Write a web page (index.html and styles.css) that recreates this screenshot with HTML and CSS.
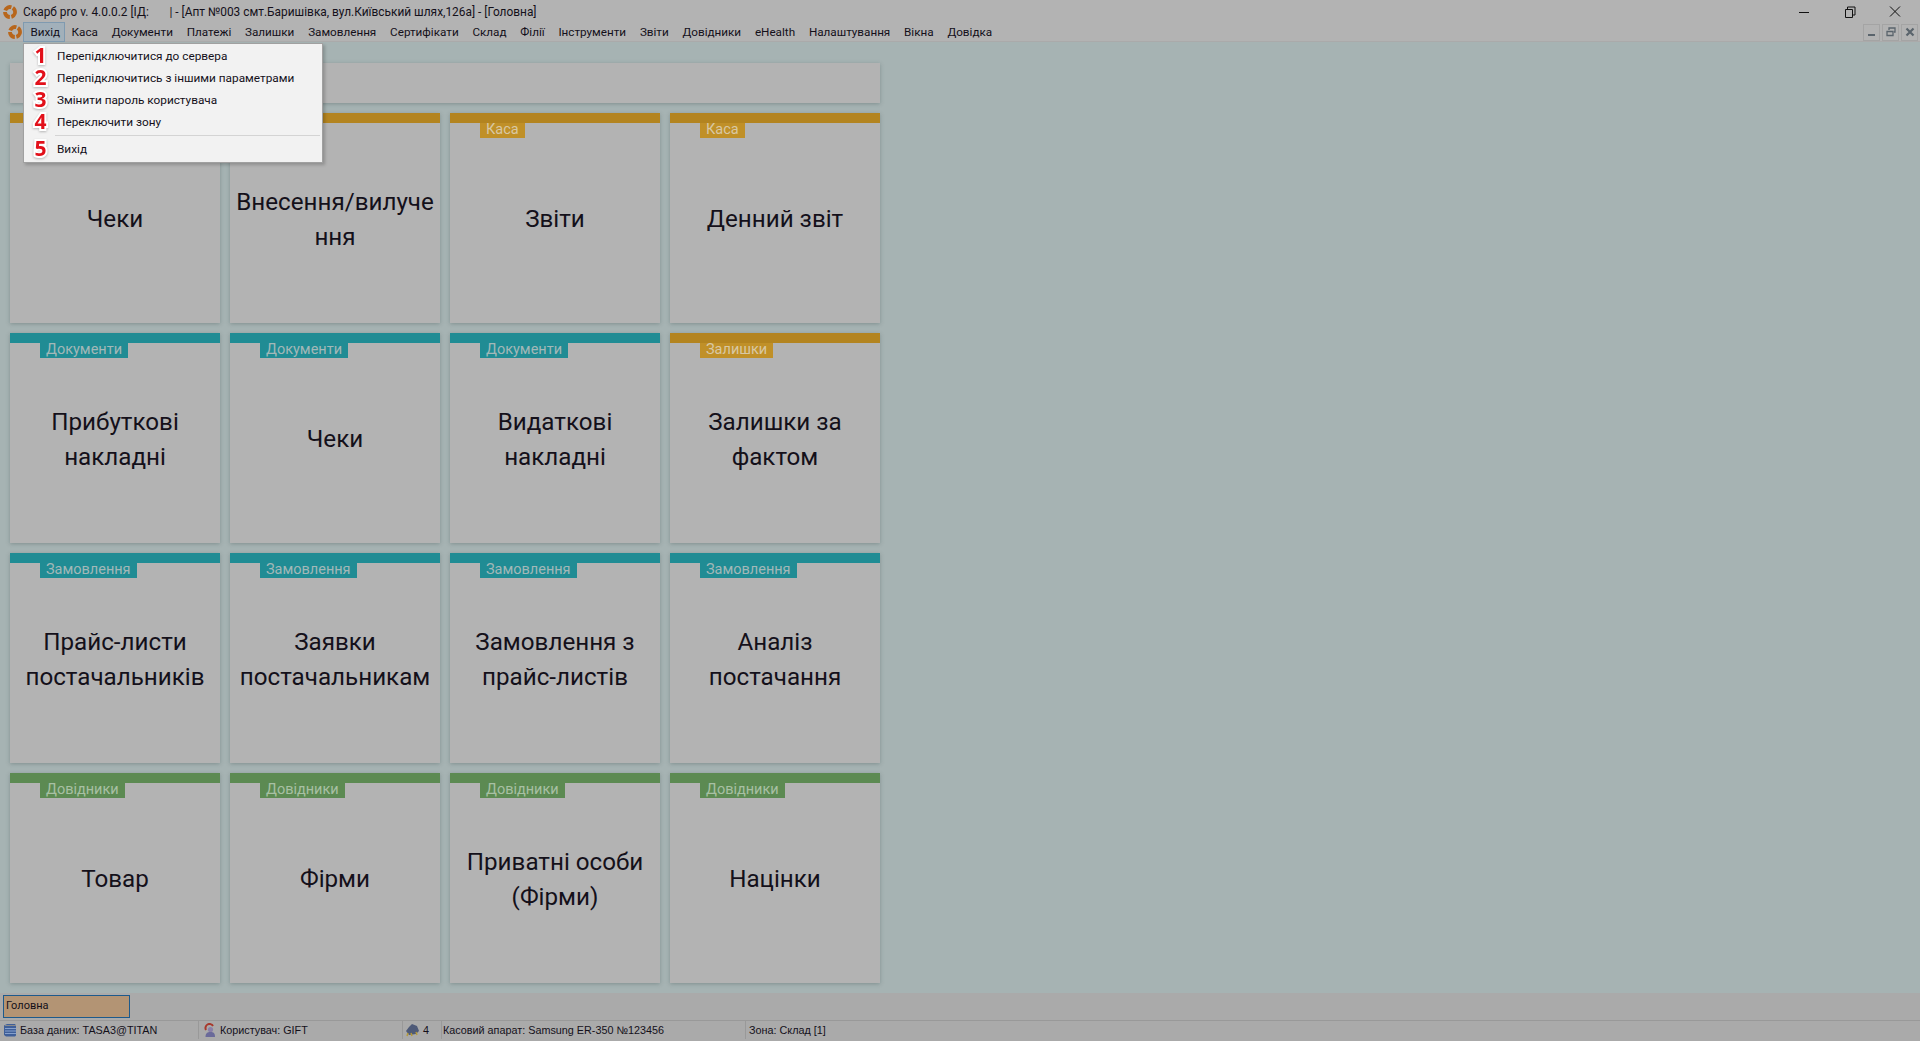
FILE: index.html
```html
<!DOCTYPE html>
<html>
<head>
    <meta charset="utf-8">
    <title>Скарб pro</title>
    <link rel="stylesheet" href="styles.css">
</head>
<body>

<div class="app">
    <div class="title-bar">
        <svg class="logo" width="14" height="14" viewBox="0 0 14 14"><circle cx="7" cy="7" r="5" fill="none" stroke="#b8661c" stroke-width="3.800" stroke-dasharray="8.500 1.500 7.500 1.500 7.500 1.500 3.400 0" transform="rotate(-25 7 7)"/></svg>
        <span class="title-text">Скарб pro v. 4.0.0.2 [ІД:&nbsp;&nbsp;&nbsp;&nbsp;&nbsp;&nbsp;&nbsp;| - [Апт №003 смт.Баришівка, вул.Київський шлях,126а] - [Головна]</span>
        <div class="win-buttons">
            <svg width="46" height="20" viewBox="0 0 46 20"><path d="M18 10.500h10" stroke="#111" fill="none"/></svg>
            <svg width="46" height="20" viewBox="0 0 46 20"><path d="M18.500 7.500h7v8h-7zM20.500 7.500v-2.500h7.500v8h-2.500" stroke="#111" fill="none"/></svg>
            <svg width="46" height="20" viewBox="0 0 46 20"><path d="M17 4.500l10 10M27 4.500l-10 10" stroke="#111" fill="none"/></svg>
        </div>
    </div>

    <div class="menu-bar">
        <svg class="logo menu-logo" width="14" height="14" viewBox="0 0 14 14"><circle cx="7" cy="7" r="5" fill="none" stroke="#b8661c" stroke-width="3.800" stroke-dasharray="8.500 1.500 7.500 1.500 7.500 1.500 3.400 0" transform="rotate(-25 7 7)"/></svg>
        <span class="menu-item active">Вихід</span>
        <span class="menu-item">Каса</span>
        <span class="menu-item">Документи</span>
        <span class="menu-item">Платежі</span>
        <span class="menu-item">Залишки</span>
        <span class="menu-item">Замовлення</span>
        <span class="menu-item">Сертифікати</span>
        <span class="menu-item">Склад</span>
        <span class="menu-item">Філії</span>
        <span class="menu-item">Інструменти</span>
        <span class="menu-item">Звіти</span>
        <span class="menu-item">Довідники</span>
        <span class="menu-item">eHealth</span>
        <span class="menu-item">Налаштування</span>
        <span class="menu-item">Вікна</span>
        <span class="menu-item">Довідка</span>
        <div class="mdi-buttons">
            <span class="mdi-btn"><svg width="10" height="10" viewBox="0 0 10 10"><path d="M1 7h7v2H1z" fill="#5a646c"/></svg></span>
            <span class="mdi-btn"><svg width="10" height="10" viewBox="0 0 10 10"><path d="M1 4.500h6v4H1zM3 3V1h6v4H8" fill="none" stroke="#5a646c" stroke-width="1.300"/></svg></span>
            <span class="mdi-btn"><svg width="10" height="10" viewBox="0 0 10 10"><path d="M1.500 1.500l7 7M8.500 1.500l-7 7" stroke="#5a646c" stroke-width="2.200"/></svg></span>
        </div>
    </div>

    <div class="dropdown">
        <div class="dropdown-item"><span class="num">1</span>Перепідключитися до сервера</div>
        <div class="dropdown-item"><span class="num">2</span>Перепідключитись з іншими параметрами</div>
        <div class="dropdown-item"><span class="num">3</span>Змінити пароль користувача</div>
        <div class="dropdown-item"><span class="num">4</span>Переключити зону</div>
        <div class="dropdown-sep"></div>
        <div class="dropdown-item"><span class="num">5</span>Вихід</div>
    </div>

    <div class="main">
        <div class="top-panel"></div>
        <div class="tiles">
            <div class="tile orange"><span class="tag">Каса</span><div class="tile-text">Чеки</div></div>
            <div class="tile orange"><span class="tag">Каса</span><div class="tile-text">Внесення/вилуче<br>ння</div></div>
            <div class="tile orange"><span class="tag">Каса</span><div class="tile-text">Звіти</div></div>
            <div class="tile orange"><span class="tag">Каса</span><div class="tile-text">Денний звіт</div></div>

            <div class="tile blue"><span class="tag">Документи</span><div class="tile-text">Прибуткові<br>накладні</div></div>
            <div class="tile blue"><span class="tag">Документи</span><div class="tile-text">Чеки</div></div>
            <div class="tile blue"><span class="tag">Документи</span><div class="tile-text">Видаткові<br>накладні</div></div>
            <div class="tile orange"><span class="tag">Залишки</span><div class="tile-text">Залишки за<br>фактом</div></div>

            <div class="tile teal"><span class="tag">Замовлення</span><div class="tile-text">Прайс-листи<br>постачальників</div></div>
            <div class="tile teal"><span class="tag">Замовлення</span><div class="tile-text">Заявки<br>постачальникам</div></div>
            <div class="tile teal"><span class="tag">Замовлення</span><div class="tile-text">Замовлення з<br>прайс-листів</div></div>
            <div class="tile teal"><span class="tag">Замовлення</span><div class="tile-text">Аналіз<br>постачання</div></div>

            <div class="tile green"><span class="tag">Довідники</span><div class="tile-text">Товар</div></div>
            <div class="tile green"><span class="tag">Довідники</span><div class="tile-text">Фірми</div></div>
            <div class="tile green"><span class="tag">Довідники</span><div class="tile-text">Приватні особи<br>(Фірми)</div></div>
            <div class="tile green"><span class="tag">Довідники</span><div class="tile-text">Націнки</div></div>
        </div>
    </div>

    <div class="task-bar">
        <div class="task-tab">Головна</div>
    </div>

    <div class="status-bar">
        <div class="status-cell cell-db">
            <svg width="14" height="14" viewBox="0 0 14 14"><path d="M1 2.500L4 1h8l1 1.500v10L12 13.500H3L1 12z" fill="#3f5f99"/><path d="M2 5.500h11M2 8h11M2 10.500h11" stroke="#86a0cc"/><path d="M2 2.500h11" stroke="#8a8a8a"/></svg>
            <span>База даних: TASA3@TITAN</span>
        </div>
        <div class="status-cell cell-user">
            <svg width="14" height="14" viewBox="0 0 14 14"><path d="M3 7a4 4 0 0 1 7-4" stroke="#a8382c" stroke-width="2" fill="none"/><circle cx="7.500" cy="6.500" r="2.600" fill="#8a80a8"/><path d="M2.500 14c0-4 2-5 5-5s4.500 1 4.500 5z" fill="#6a6a9a"/></svg>
            <span>Користувач: GIFT</span>
        </div>
        <div class="status-cell cell-count">
            <svg width="14" height="14" viewBox="0 0 14 14"><path d="M1 8l3-4 3-3 5 2 2 5-3 3-7 1z" fill="#4e5a78"/><path d="M3 10l-1 3M6 10l1 3M11 9l1 3" stroke="#b59a3a" stroke-width="1.500"/></svg>
            <span class="count-num">4</span>
        </div>
        <div class="status-cell cell-cash">Касовий апарат: Samsung ER-350 №123456</div>
        <div class="status-cell cell-zone">Зона: Склад [1]</div>
    </div>
</div>

</body>
</html>
```

FILE: styles.css
```css
body, html {
    height: 100%;
    margin: 0;
    font-family: Roboto, "Noto Sans", sans-serif;
    overflow: hidden;
    background-color: #aaaaaa;
}

.app {
    display: flex;
    flex-direction: column;
    height: 1041px;
    position: relative;
    background-color: #a6b3b3;
    color: #14101a;
}

.title-bar {
    height: 23px;
    flex: none;
    display: flex;
    align-items: center;
    background-color: #b3b3b3;
    font-size: 11.9px;
}

.logo {
    flex: none;
}

.title-bar .logo {
    margin: 0 6px 0 3px;
}

.win-buttons {
    margin-left: auto;
    display: flex;
    padding-right: 1px;
}

.menu-bar {
    height: 18px;
    flex: none;
    display: flex;
    align-items: center;
    background-color: #b3b3b3;
    border-bottom: 1px solid #aaaaaa;
    font-size: 11.7px;
    padding-left: 8px;
}

.menu-logo {
    margin-right: 1px;
}

.menu-item {
    padding: 0 6.4px;
    height: 18px;
    line-height: 18px;
    border: 1px solid transparent;
    margin-right: -1px;
}

.menu-item.active {
    padding-right: 4px;
    background-color: #a2b0ba;
    border-color: #7f9ab0;
}

.mdi-buttons {
    margin-left: auto;
    display: flex;
    gap: 2px;
    padding-right: 2px;
}

.mdi-btn {
    width: 15px;
    height: 15px;
    border: 1px solid #a4a4a4;
    display: flex;
    align-items: center;
    justify-content: center;
}

.dropdown {
    position: absolute;
    left: 23px;
    top: 43px;
    width: 298px;
    padding: 1px 0 2px;
    background-color: #f2f2f2;
    border: 1px solid #a0a0a0;
    box-shadow: 2px 2px 3px rgba(0, 0, 0, 0.2);
    font-size: 11.8px;
    z-index: 5;
}

.dropdown-item {
    height: 22px;
    display: flex;
    align-items: center;
    color: #14101a;
}

.num {
    width: 33px;
    height: 20px;
    margin-top: -3px;
    flex: none;
    text-align: center;
    font-family: "Open Sans", sans-serif;
    font-size: 21px;
    font-weight: bold;
    line-height: 20px;
    color: #e2101a;
    -webkit-text-stroke: 4px #ffffff;
    paint-order: stroke fill;
    filter: drop-shadow(0 1px 1px rgba(0, 0, 0, 0.25));
}

.dropdown-sep {
    height: 1px;
    margin: 2px 2px 2px 31px;
    background-color: #d4d4d4;
}

.main {
    flex: 1;
    padding: 21px 10px 0;
    overflow: hidden;
}

.top-panel {
    width: 870px;
    height: 40px;
    background-color: #b3b3b3;
    box-shadow: 0 1px 4px rgba(60, 80, 80, 0.35);
    margin-bottom: 10px;
}

.tiles {
    display: grid;
    grid-template-columns: repeat(4, 210px);
    grid-auto-rows: 210px;
    gap: 10px;
}

.tile {
    position: relative;
    display: flex;
    align-items: center;
    justify-content: center;
    background-color: #b3b3b3;
    box-shadow: 0 1px 4px rgba(60, 80, 80, 0.35);
    border-top: 10px solid #b38420;
    padding-bottom: 7px;
    box-sizing: border-box;
}

.tile.blue { border-top-color: #208c94; }
.tile.teal { border-top-color: #208c94; }
.tile.green { border-top-color: #5c8a52; }

.tag {
    position: absolute;
    left: 30px;
    top: 0;
    height: 15px;
    line-height: 13px;
    padding: 0 6px;
    font-size: 14.500px;
    color: #a3b8b8;
    background-color: #208c94;
}

.orange .tag {
    background-color: #c09028;
    color: #d8c8a4;
}

.green .tag {
    background-color: #5c8a52;
    color: #a8c0a4;
}

.tile-text {
    font-size: 24.2px;
    line-height: 35px;
    text-align: center;
    white-space: nowrap;
    color: #14101a;
}

.task-bar {
    height: 28px;
    flex: none;
    box-sizing: border-box;
    padding: 2px 3px;
    background-color: #aaaaaa;
    border-bottom: 1px solid #999999;
}

.task-tab {
    width: 121px;
    height: 21px;
    border: 1px solid #1d5a8c;
    padding: 0 2px;
    background-color: #b39474;
    font-size: 11px;
    line-height: 20px;
}

.status-bar {
    height: 20px;
    flex: none;
    box-sizing: border-box;
    padding: 0 0 2px 3px;
    display: flex;
    align-items: center;
    background-color: #aaaaaa;
    font-family: "Liberation Sans", sans-serif;
    font-size: 10.800px;
}

.status-cell {
    display: flex;
    align-items: center;
    gap: 3px;
    height: 18px;
    box-sizing: border-box;
    white-space: nowrap;
}

.cell-db { width: 196px; border-right: 1px solid #999999; }
.cell-user { width: 204px; padding-left: 4px; border-right: 1px solid #999999; }
.cell-count { width: 39px; padding-left: 2px; border-right: 1px solid #999999; }
.cell-cash { width: 304px; padding-left: 1px; border-right: 1px solid #999999; }
.cell-zone { padding-left: 3px; }

.count-num { margin-left: 1px; }
```
